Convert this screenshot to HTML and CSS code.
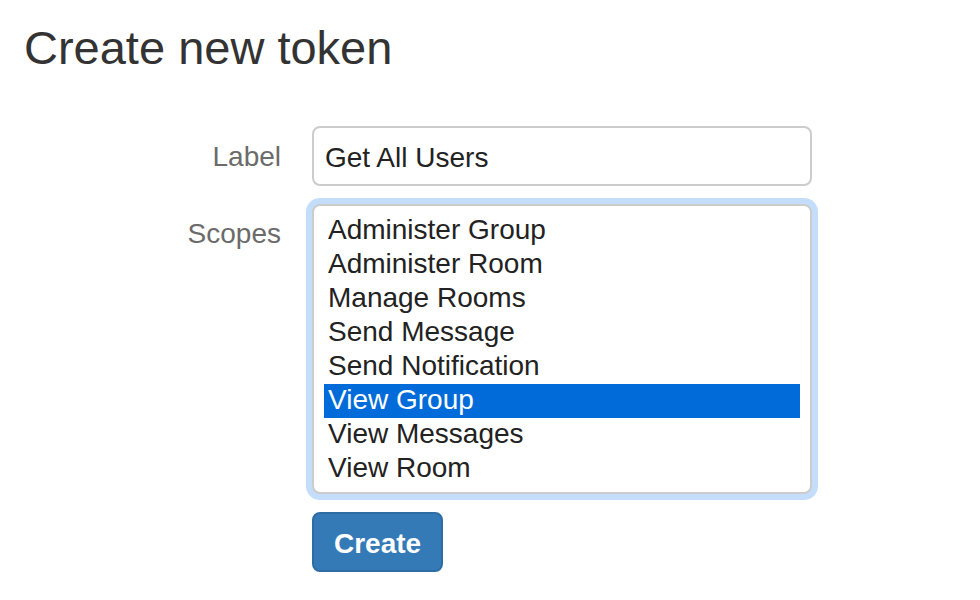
FILE: index.html
```html
<!DOCTYPE html>
<html lang="en">
<head>
<meta charset="utf-8">
<title>Create new token</title>
<link rel="stylesheet" href="styles.css">
</head>
<body>
<main class="page">
  <h1 class="title">Create new token</h1>
  <form class="token-form">
    <label class="field-label field-label--input" for="label">Label</label>
    <input class="text-input" id="label" type="text" value="Get All Users">

    <span class="field-label field-label--list">Scopes</span>
    <div class="listbox" role="listbox" aria-multiselectable="true">
      <div class="option" role="option">Administer Group</div>
      <div class="option" role="option">Administer Room</div>
      <div class="option" role="option">Manage Rooms</div>
      <div class="option" role="option">Send Message</div>
      <div class="option" role="option">Send Notification</div>
      <div class="option option--selected" role="option" aria-selected="true">View Group</div>
      <div class="option" role="option">View Messages</div>
      <div class="option" role="option">View Room</div>
    </div>

    <span class="spacer"></span>
    <div class="actions">
      <button class="btn-primary" type="button">Create</button>
    </div>
  </form>
</main>
</body>
</html>
```

FILE: styles.css
```css
html, body {
  margin: 0;
  padding: 0;
  background: #ffffff;
}

body {
  font-family: "Liberation Sans", Arial, Helvetica, sans-serif;
  color: #333333;
}

.page {
  padding: 22px 0 0 24px;
}

.title {
  margin: 0;
  font-size: 47px;
  font-weight: 500;
  line-height: 52px;
  color: #333333;
}

.token-form {
  margin-top: 52px;
  display: grid;
  grid-template-columns: 257px 500px;
  column-gap: 31px;
  row-gap: 18px;
  align-items: start;
}

.field-label {
  text-align: right;
  font-size: 28px;
  line-height: 34px;
  color: #6b6b6b;
}

.field-label--input {
  padding-top: 14px;
}

.field-label--list {
  padding-top: 13px;
}

.text-input {
  box-sizing: border-box;
  width: 500px;
  height: 60px;
  margin: 0;
  padding: 4px 11px 0;
  border: 2px solid #cccccc;
  border-radius: 8px;
  font-family: inherit;
  font-size: 28px;
  color: #222222;
  background: #ffffff;
  outline: none;
}

.listbox {
  box-sizing: border-box;
  width: 500px;
  height: 290px;
  padding: 8px 10px 6px;
  border: 2px solid #cccccc;
  border-radius: 8px;
  box-shadow: 0 0 0 6px #c3ddfa;
  background: #ffffff;
}

.option {
  height: 34px;
  padding: 0 0 2px 4px;
  box-sizing: border-box;
  font-size: 28px;
  line-height: 32px;
  color: #222222;
  white-space: nowrap;
}

.option--selected {
  background: #006bd9;
  color: #ffffff;
}

.actions {
  display: flex;
}

.btn-primary {
  box-sizing: border-box;
  height: 60px;
  margin: 0;
  padding: 3px 20px 0;
  border: 2px solid #2e6da4;
  border-radius: 8px;
  background: #337ab7;
  color: #ffffff;
  font-family: inherit;
  font-size: 28px;
  font-weight: bold;
  line-height: 1;
  cursor: pointer;
}
```
